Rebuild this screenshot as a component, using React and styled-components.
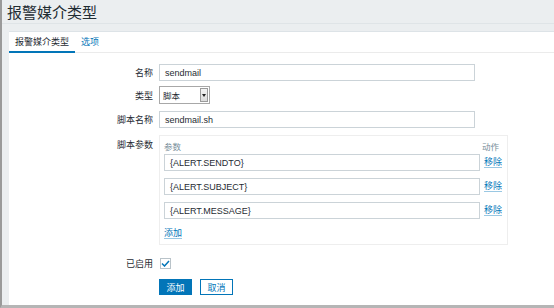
import React from "react";
import styled, { createGlobalStyle } from "styled-components";

const Global = createGlobalStyle`
  html, body { margin: 0; padding: 0; }
  body {
    width: 554px; height: 308px; overflow: hidden;
    background: #ebeef0;
    font-family: "Liberation Sans", "Noto Sans CJK SC", sans-serif;
    color: #1f2c33;
  }
`;

const Frame = styled.div`
  display: flex;
  width: 554px;
  height: 308px;
  box-sizing: border-box;
  border-left: 2px solid #9a9a9a;
  border-bottom: 3px solid #b5b5b5;
  overflow: hidden;
`;

const Page = styled.div`
  flex: 1;
  display: flex;
  flex-direction: column;
  padding-left: 7px;
`;

const Header = styled.div`
  height: 23px;
  border-bottom: 1px solid #dfe4e7;
  display: flex;
  align-items: center;
  margin-left: -7px;
  padding-left: 5px;
`;

const Title = styled.h1`
  margin: 0;
  font-size: 15px;
  font-weight: normal;
  color: #1f2c33;
`;

const Card = styled.div`
  margin-top: 7px;
  flex: 1;
  background: #fff;
  border-top: 1px solid #dde3e7;
`;

const TabBar = styled.div`
  display: flex;
  height: 20px;
  border-bottom: 1px solid #ebebeb;
`;

const Tab = styled.div`
  padding: 0 6px;
  display: flex;
  align-items: center;
  font-size: 9px;
  color: ${(p) => (p.$active ? "#1f2c33" : "#0275b8")};
  border-bottom: 2px solid ${(p) => (p.$active ? "#0275b8" : "transparent")};
  margin-bottom: -1px;
  box-sizing: border-box;
`;

const Form = styled.div`
  display: flex;
  flex-direction: column;
  padding-top: 11px;
`;

const Row = styled.div`
  display: flex;
  align-items: ${(p) => (p.$top ? "flex-start" : "center")};
  margin-bottom: ${(p) => p.$mb || 0}px;
`;

const Label = styled.div`
  width: 144px;
  margin-right: 6px;
  text-align: right;
  font-size: 9px;
  color: #1f2c33;
  padding-top: ${(p) => (p.$top ? 3 : 0)}px;
`;

const Input = styled.div`
  width: ${(p) => p.$w}px;
  height: 17px;
  box-sizing: border-box;
  border: 1px solid #cbd3d8;
  background: #fff;
  display: flex;
  align-items: center;
  padding-left: 5px;
  font-size: 9px;
  color: #1f2c33;
`;

const Select = styled.div`
  width: 51px;
  height: 18px;
  box-sizing: border-box;
  border: 1px solid #a8a8a8;
  display: flex;
  align-items: stretch;
  font-size: 8.5px;
`;

const SelectText = styled.div`
  flex: 1;
  display: flex;
  align-items: center;
  padding-left: 3px;
`;

const SelectBtn = styled.div`
  width: 8px;
  margin: 1px;
  background: linear-gradient(#f4f4f4, #dcdcdc);
  border: 1px solid #9b9b9b;
  box-sizing: border-box;
  display: flex;
  align-items: center;
  justify-content: center;
`;

const ParamBox = styled.div`
  width: 349px;
  box-sizing: border-box;
  border: 1px solid #eeeeee;
  padding: 2px 0 0 4px;
  height: 110px;
  display: flex;
  flex-direction: column;
`;

const ParamHead = styled.div`
  display: flex;
  justify-content: space-between;
  height: 15px;
  align-items: center;
  font-size: 8.5px;
  color: #768d99;
  padding-right: 8px;
  margin-bottom: 1px;
`;

const ParamRow = styled.div`
  display: flex;
  align-items: center;
  margin-bottom: 7px;
`;

const Link = styled.span`
  font-size: 9px;
  color: #0275b8;
  border-bottom: 1px solid rgba(2, 117, 184, 0.4);
  line-height: 10px;
  margin-left: ${(p) => p.$ml || 0}px;
`;

const AddWrap = styled.div`
  margin-top: -4px;
`;

const Check = styled.div`
  width: 11px;
  height: 11px;
  box-sizing: border-box;
  border: 1px solid #b9c3c9;
  margin-left: 1px;
  display: flex;
  align-items: center;
  justify-content: center;
`;

const Buttons = styled.div`
  display: flex;
  gap: 8px;
  margin-left: 150px;
`;

const Button = styled.div`
  width: 33px;
  height: 16px;
  box-sizing: border-box;
  border: 1px solid #0275b8;
  background: ${(p) => (p.$primary ? "#0275b8" : "#fff")};
  color: ${(p) => (p.$primary ? "#fff" : "#0275b8")};
  font-size: 9px;
  display: flex;
  align-items: center;
  justify-content: center;
`;

const params = ["{ALERT.SENDTO}", "{ALERT.SUBJECT}", "{ALERT.MESSAGE}"];

export default function App() {
  return (
    <>
      <Global />
      <Frame>
        <Page>
          <Header>
            <Title>报警媒介类型</Title>
          </Header>
          <Card>
            <TabBar>
              <Tab $active>报警媒介类型</Tab>
              <Tab>选项</Tab>
            </TabBar>
            <Form>
              <Row $mb={5}>
                <Label>名称</Label>
                <Input $w={316}>sendmail</Input>
              </Row>
              <Row $mb={7}>
                <Label>类型</Label>
                <Select>
                  <SelectText>脚本</SelectText>
                  <SelectBtn>
                    <svg width="4" height="3" viewBox="0 0 4 3">
                      <path d="M0 0H4L2 3Z" fill="#222" />
                    </svg>
                  </SelectBtn>
                </Select>
              </Row>
              <Row $mb={7}>
                <Label>脚本名称</Label>
                <Input $w={316}>sendmail.sh</Input>
              </Row>
              <Row $top $mb={12}>
                <Label $top>脚本参数</Label>
                <ParamBox>
                  <ParamHead>
                    <span>参数</span>
                    <span>动作</span>
                  </ParamHead>
                  {params.map((p) => (
                    <ParamRow key={p}>
                      <Input $w={316}>{p}</Input>
                      <Link $ml={4}>移除</Link>
                    </ParamRow>
                  ))}
                  <AddWrap>
                    <Link>添加</Link>
                  </AddWrap>
                </ParamBox>
              </Row>
              <Row $mb={9}>
                <Label>已启用</Label>
                <Check>
                  <svg width="9" height="7" viewBox="0 0 9 7">
                    <path d="M1 3.5L3.5 6L8 1" fill="none" stroke="#0275b8" strokeWidth="1.5" />
                  </svg>
                </Check>
              </Row>
              <Buttons>
                <Button $primary>添加</Button>
                <Button>取消</Button>
              </Buttons>
            </Form>
          </Card>
        </Page>
      </Frame>
    </>
  );
}
